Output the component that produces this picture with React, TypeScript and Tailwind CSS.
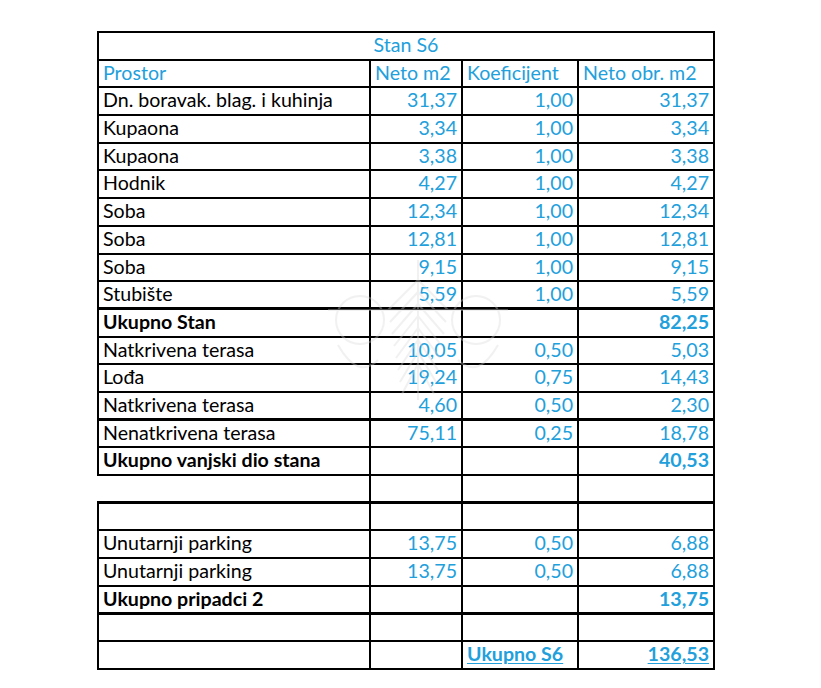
import React from 'react';

type Row = {
  name?: string;
  neto?: string;
  koef?: string;
  obr?: string;
  bold?: boolean;
  thickTop?: boolean;
  noLeft?: boolean;
};

const rows: Row[] = [
  { name: 'Dn. boravak. blag. i kuhinja', neto: '31,37', koef: '1,00', obr: '31,37' },
  { name: 'Kupaona', neto: '3,34', koef: '1,00', obr: '3,34' },
  { name: 'Kupaona', neto: '3,38', koef: '1,00', obr: '3,38' },
  { name: 'Hodnik', neto: '4,27', koef: '1,00', obr: '4,27' },
  { name: 'Soba', neto: '12,34', koef: '1,00', obr: '12,34' },
  { name: 'Soba', neto: '12,81', koef: '1,00', obr: '12,81' },
  { name: 'Soba', neto: '9,15', koef: '1,00', obr: '9,15' },
  { name: 'Stubište', neto: '5,59', koef: '1,00', obr: '5,59' },
  { name: 'Ukupno Stan', obr: '82,25', bold: true, thickTop: true },
  { name: 'Natkrivena terasa', neto: '10,05', koef: '0,50', obr: '5,03' },
  { name: 'Lođa', neto: '19,24', koef: '0,75', obr: '14,43' },
  { name: 'Natkrivena terasa', neto: '4,60', koef: '0,50', obr: '2,30' },
  { name: 'Nenatkrivena terasa', neto: '75,11', koef: '0,25', obr: '18,78', thickTop: true },
  { name: 'Ukupno vanjski dio stana', obr: '40,53', bold: true },
  { noLeft: true },
  { thickTop: true },
  { name: 'Unutarnji parking', neto: '13,75', koef: '0,50', obr: '6,88' },
  { name: 'Unutarnji parking', neto: '13,75', koef: '0,50', obr: '6,88' },
  { name: 'Ukupno pripadci 2', obr: '13,75', bold: true },
  { thickTop: true },
];

const cell = 'border-2 border-black px-[4px] pt-0 pb-[2px] leading-none whitespace-nowrap';

// faint logo watermark sitting over the middle of the table
const Watermark = () => (
  <svg className="pointer-events-none absolute left-[318px] top-[250px]" width="200" height="160" viewBox="0 0 200 160" fill="none" stroke="#d8d8d8" strokeWidth="2" opacity="0.35">
    <path d="M100 10 L100 150" />
    {[0, 1, 2, 3, 4, 5, 6, 7].map((i) => (
      <path key={i} d={`M100 ${30 + i * 12} L${70 + i * 2} ${60 + i * 12}`} />
    ))}
    {[0, 1, 2, 3, 4, 5, 6, 7].map((i) => (
      <path key={'r' + i} d={`M100 ${30 + i * 12} L${130 - i * 2} ${60 + i * 12}`} />
    ))}
    <circle cx="42" cy="70" r="24" />
    <circle cx="158" cy="70" r="24" />
    <path d="M20 95 Q40 130 60 110 M140 110 Q160 130 180 95" />
    <path d="M10 60 L190 60" />
  </svg>
);

export default function App() {
  return (
    <div className="relative min-h-[688px] w-[821px] bg-white pt-[31px] pl-[97px]" style={{ fontFamily: 'Lato, "Liberation Sans", sans-serif' }}>
      <table className="border-collapse table-fixed w-[616px] text-[19.6px] text-black">
        <colgroup>
          <col className="w-[272px]" />
          <col className="w-[92px]" />
          <col className="w-[116px]" />
          <col className="w-[136px]" />
        </colgroup>
        <tbody>
          <tr className="h-[27.7px]">
            <td colSpan={4} className={`${cell} text-center text-[#22a0dc]`}>Stan S6</td>
          </tr>
          <tr className="h-[27.7px] text-[#22a0dc]">
            <td className={cell}>Prostor</td>
            <td className={cell}>Neto m2</td>
            <td className={cell}>Koeficijent</td>
            <td className={cell}>Neto obr. m2</td>
          </tr>
          {rows.map((r, i) => (
            <tr key={i} className={`h-[27.7px] ${r.bold ? 'font-bold' : ''}`}>
              <td className={`${cell} ${r.thickTop ? 'border-t-[3px]' : ''} ${r.noLeft ? 'border-l-0' : ''}`}>{r.name}</td>
              <td className={`${cell} ${r.thickTop ? 'border-t-[3px]' : ''} text-right text-[#22a0dc]`}>{r.neto}</td>
              <td className={`${cell} ${r.thickTop ? 'border-t-[3px]' : ''} text-right text-[#22a0dc]`}>{r.koef}</td>
              <td className={`${cell} ${r.thickTop ? 'border-t-[3px]' : ''} text-right text-[#22a0dc]`}>{r.obr}</td>
            </tr>
          ))}
          <tr className="h-[27.7px] font-bold text-[#22a0dc]">
            <td className={cell}></td>
            <td className={cell}></td>
            <td className={`${cell} underline underline-offset-2`}>Ukupno S6</td>
            <td className={`${cell} text-right underline underline-offset-2`}>136,53</td>
          </tr>
        </tbody>
      </table>
      <Watermark />
    </div>
  );
}
